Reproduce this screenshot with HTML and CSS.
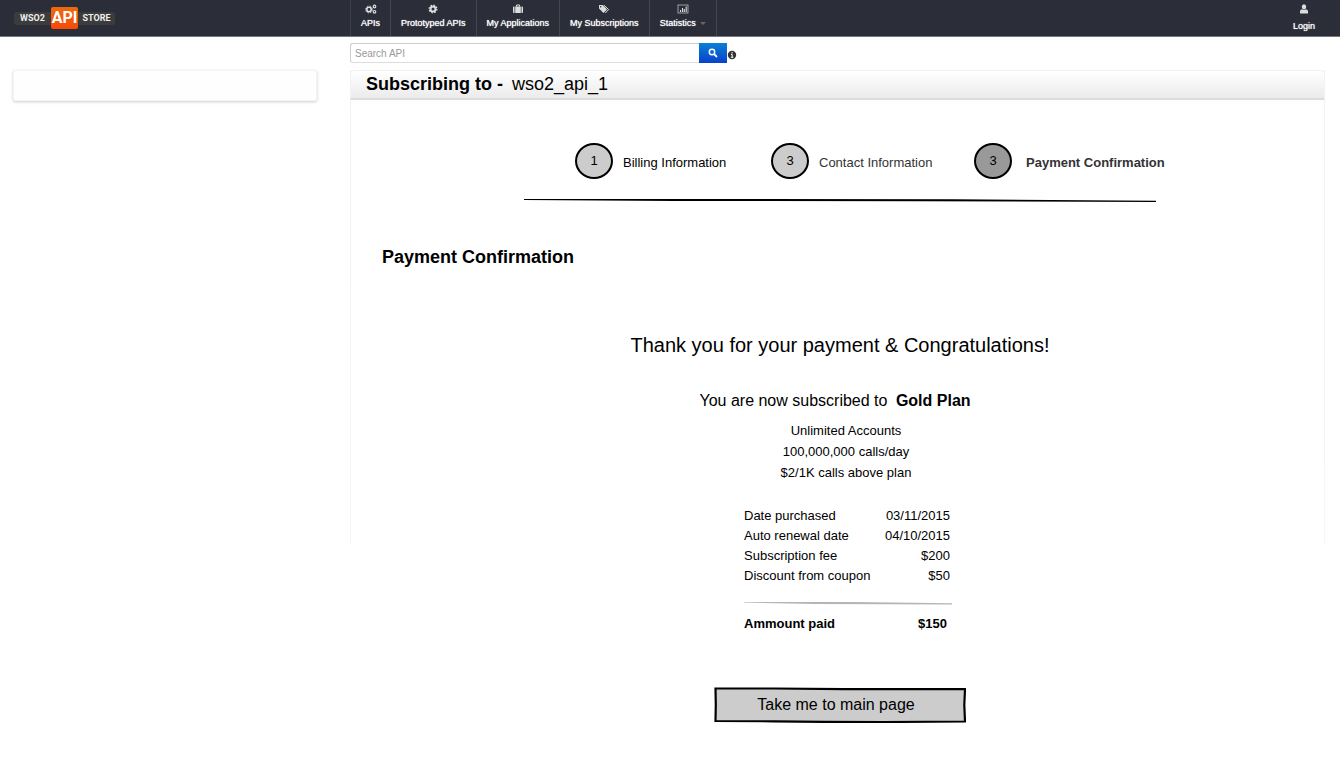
FILE: index.html
```html
<!DOCTYPE html>
<html lang="en">
<head>
<meta charset="utf-8">
<title>WSO2 API Store</title>
<link rel="stylesheet" href="styles.css">
</head>
<body>
<header class="topbar">
  <a class="logo" href="#"><span class="logo-side">WSO2</span><span class="logo-api">API</span><span class="logo-side">STORE</span></a>
  <nav class="nav">
    <a class="nav-item" href="#">
      <svg class="icon" viewBox="0 0 12 10"><g fill="none" stroke="#ddd"><circle cx="4" cy="5.5" r="2.2" stroke-width="1.6"/><circle cx="4" cy="5.5" r="3.4" stroke-width="1" stroke-dasharray="1.4 1.27"/><circle cx="9.5" cy="2.5" r="1.3" stroke-width="1.2"/><circle cx="9.5" cy="7.8" r="1.3" stroke-width="1.2"/></g></svg>
      APIs</a>
    <a class="nav-item" href="#">
      <svg class="icon" viewBox="0 0 12 10"><g fill="none" stroke="#ddd"><circle cx="6" cy="5" r="2.5" stroke-width="2"/><circle cx="6" cy="5" r="3.9" stroke-width="1.2" stroke-dasharray="1.6 1.46"/></g></svg>
      Prototyped APIs</a>
    <a class="nav-item" href="#">
      <svg class="icon" viewBox="0 0 12 10"><path d="M4.5 2.5V1h3v1.500" fill="none" stroke="#ddd"/><path d="M1.800 2.500H2.500V9H1.800Q1 9 1 8V3.500Q1 2.500 1.800 2.500ZM3.200 2.500h5.600V9H3.200ZM9.500 2.500h.7Q11 2.500 11 3.500V8q0 1-.8 1h-.7Z" fill="#ddd"/></svg>
      My Applications</a>
    <a class="nav-item" href="#">
      <svg class="icon" viewBox="0 0 12 10"><path d="M1 1h3.800L9 5.400 5.500 9 1 4.600Z" fill="#ddd"/><circle cx="2.700" cy="2.700" r=".8" fill="#2b2e38"/><path d="M6 1.200 10.600 5.600 7.300 9" fill="none" stroke="#ddd" stroke-width="1"/></svg>
      My Subscriptions</a>
    <a class="nav-item" href="#">
      <svg class="icon" viewBox="0 0 12 10"><rect x="1" y="1" width="10" height="8" fill="none" stroke="#bbb" stroke-width=".8"/><path d="M3.500 8V6M5.500 8V4M7.300 8V5M9.200 8V2.500" stroke="#ddd" stroke-width="1.100"/></svg>
      <span>Statistics <span class="caret"></span></span></a>
  </nav>
  <a class="login" href="#">
    <svg class="icon" viewBox="0 0 12 10"><ellipse cx="6" cy="2.800" rx="2.200" ry="2.600" fill="#ddd"/><path d="M2 9.500V7.500Q2 5.500 4 5.300Q6 6.700 8 5.300Q10 5.500 10 7.500V9.500Z" fill="#ddd"/></svg>
    Login</a>
</header>

<div class="page">
  <aside class="sidebar"><div class="side-box"></div></aside>
  <main class="main">
    <form class="search">
      <input class="search-input" type="text" placeholder="Search API" aria-label="Search API">
      <button class="search-btn" type="button" aria-label="Search"><svg width="10" height="10" viewBox="0 0 10 10"><circle cx="4" cy="4" r="2.700" fill="none" stroke="#fff" stroke-width="1.500"/><path d="M6 6 9 9" stroke="#fff" stroke-width="1.800"/></svg></button>
      <svg class="info" viewBox="0 0 10 10"><circle cx="5" cy="5" r="4.200" fill="#333"/><path d="M5 2v1.500M4 4.500h1.200V7M3.800 7.300h2.600" stroke="#fff" fill="none"/></svg>
    </form>

    <section class="panel">
      <h1 class="panel-head">Subscribing to - <span class="api-name">wso2_api_1</span></h1>
      <div class="panel-body">
        <ol class="steps">
          <li class="step"><span class="dot">1</span><span class="step-label">Billing Information</span></li>
          <li class="step muted"><span class="dot">3</span><span class="step-label">Contact Information</span></li>
          <li class="step current"><span class="dot">3</span><span class="step-label">Payment Confirmation</span></li>
        </ol>
        <svg class="rule" viewBox="0 0 632 6" preserveAspectRatio="none"><path d="M0 2 220 2 430 2.300 632 3.700V5L400 4.300 150 4 0 3Z" fill="#000"/></svg>

        <h2 class="title">Payment Confirmation</h2>
        <p class="thanks">Thank you for your payment &amp; Congratulations!</p>
        <p class="subscribed">You are now subscribed to <strong class="plan">Gold Plan</strong></p>
        <ul class="features">
          <li>Unlimited Accounts</li>
          <li>100,000,000 calls/day</li>
          <li>$2/1K calls above plan</li>
        </ul>

        <table class="bill">
          <tbody>
            <tr><th scope="row">Date purchased</th><td>03/11/2015</td></tr>
            <tr><th scope="row">Auto renewal date</th><td>04/10/2015</td></tr>
            <tr><th scope="row">Subscription fee</th><td>$200</td></tr>
            <tr><th scope="row">Discount from coupon</th><td>$50</td></tr>
          </tbody>
          <tbody>
            <tr><td class="bill-line" colspan="2"><svg viewBox="0 0 208 6" preserveAspectRatio="none"><path d="M0 2 110 2 208 3.300V4.500L70 4 0 2.600Z" fill="#b5b5b5"/></svg></td></tr>
          </tbody>
          <tfoot>
            <tr><th scope="row">Ammount paid</th><td>$150</td></tr>
          </tfoot>
        </table>

        <button class="main-btn" type="button">
          <svg class="btn-frame" viewBox="0 0 252 36" preserveAspectRatio="none"><path d="M1.500 1.500 60 1.500 130 2.200 251 2 250.300 18 251 34.500 170 35 110 34.800 60 34.300 1.500 34 1.800 18Z" fill="#ccc" stroke="#000" stroke-width="2.200"/></svg>
          <span class="btn-text">Take me to main page</span>
        </button>
      </div>
    </section>
  </main>
</div>
</body>
</html>
```
FILE: styles.css
```css
* { box-sizing: border-box; }
body {
  margin: 0;
  background: #fff;
  color: #000;
  font: 13px/20px "Liberation Sans", Arial, sans-serif;
}
h1, h2, p, ul, ol { margin: 0; padding: 0; }
ul, ol { list-style: none; }

.topbar {
  display: grid;
  grid-template-columns: 350px 1fr auto;
  height: 37px;
  background: #2b2e38;
  border-bottom: 1px solid #777;
}
.topbar a { color: #fff; text-decoration: none; }
.logo {
  display: flex;
  align-items: center;
  justify-self: start;
  align-self: center;
  height: 13px;
  margin-left: 14px;
  background: #3c3c3c;
  border-radius: 3px;
  font-family: Roboto, "Liberation Sans", sans-serif;
  font-weight: bold;
}
.logo-side { min-width: 37px; padding: 0 4px; font-size: 9px; line-height: 13px; color: #eee; text-align: center; }
.logo-api {
  width: 27px;
  background: linear-gradient(#ee6a0a, #f84a08);
  border-radius: 2px;
  font-size: 16px;
  line-height: 22px;
  text-align: center;
}
.nav { display: flex; border-left: 1px solid #3f4149; justify-self: start; }
.nav-item, .login {
  display: flex;
  flex-direction: column;
  align-items: center;
  padding: 4px 10px 0;
  font-size: 9px;
  line-height: 12px;
  gap: 3px;
  text-shadow: 0 0 1px #fff;
}
.nav-item { border-right: 1px solid #44464e; }
.login { padding-right: 25px; gap: 6px; }
.icon { width: 12px; height: 10px; }
.caret {
  display: inline-block;
  margin-left: 2px;
  vertical-align: middle;
  border: 3px solid transparent;
  border-top-color: #666;
  border-bottom: 0;
}

.page { display: grid; grid-template-columns: 350px 1fr; }
.sidebar { padding: 33px 33px 0 13px; }
.side-box {
  height: 31px;
  background: #fefefe;
  border: 1px solid #f4f4f4;
  border-radius: 2px;
  box-shadow: 0 1px 3px #ccc;
}
.main { padding: 6px 15px 40px 0; }
.search { display: flex; margin-bottom: 7px; }
.search-input {
  flex: 0 1 349px;
  height: 20px;
  padding: 0 4px;
  border: 1px solid #ccc;
  border-bottom-color: #ddd;
  border-right: 0;
  border-radius: 3px 0 0 3px;
  font: 10px "Liberation Sans", Arial, sans-serif;
}
.search-input::placeholder { color: #999; opacity: 1; }
.search-btn {
  display: grid;
  place-items: center;
  width: 28px;
  height: 20px;
  padding: 0;
  border: 0;
  background: linear-gradient(#0a80d4, #0842cc);
}
.info { width: 10px; height: 10px; align-self: flex-end; margin-bottom: 3px; }

.panel {
  background:
    linear-gradient(#f2f2f2, #f6f6f6) 0 0 / 1px 475px no-repeat,
    linear-gradient(#f2f2f2, #f6f6f6) 100% 0 / 1px 475px no-repeat;
}
.panel-head {
  height: 30px;
  padding-left: 15px;
  border-radius: 4px 4px 0 0;
  border: 1px solid #f2f2f2;
  border-bottom: 2px solid #dcdcdc;
  background: linear-gradient(#fff, #ebebeb);
  font-size: 18px;
  line-height: 27px;
}
.api-name { margin-left: 4px; font-weight: normal; }
.panel-body {
  display: flex;
  flex-direction: column;
  align-items: center;
  padding: 43px 0 0 5px;
}
.steps {
  display: grid;
  grid-template-columns: 196px 203px auto;
  width: 632px;
  padding-left: 51px;
}
.step { display: flex; align-items: center; gap: 10px; white-space: nowrap; }
.step-label { padding-top: 3px; }
.dot {
  flex: none;
  width: 38px;
  height: 36px;
  border: 2px solid #000;
  border-radius: 50%;
  background: #ccc;
  color: #000;
  font-weight: normal;
  line-height: 32px;
  text-align: center;
}
.muted { color: #333; }
.current { gap: 14px; color: #333; font-weight: bold; }
.current .dot { background: #999; }
.rule { width: 632px; height: 6px; margin-top: 18px; }
.title {
  align-self: flex-start;
  margin-top: 42px;
  padding-left: 27px;
  font-size: 18px;
  line-height: 24px;
}
.thanks { margin-top: 64px; font-size: 20px; line-height: 24px; }
.subscribed { margin-top: 32px; padding-right: 10px; font-size: 16px; line-height: 24px; }
.plan { margin-left: 4px; }
.features { margin-top: 7px; padding-left: 12px; line-height: 21px; text-align: center; }
.bill {
  width: 224px;
  margin-top: 23px;
  padding-left: 16px;
  border-spacing: 0;
}
.bill th { padding: 0; text-align: left; font-weight: normal; }
.bill td { padding: 0 2px 0 0; text-align: right; }
.bill .bill-line { padding: 14px 0 8px; }
.bill-line svg { display: block; width: 100%; height: 6px; }
.bill tfoot th, .bill tfoot td { font-weight: bold; }
.bill tfoot td { padding-right: 5px; }
.main-btn {
  display: grid;
  width: 252px;
  height: 36px;
  margin-top: 53px;
  padding: 0;
  border: 0;
  background: none;
  color: #000;
  font: 16px/36px "Liberation Sans", Arial, sans-serif;
}
.btn-frame, .btn-text { grid-area: 1 / 1; }
.btn-frame { width: 100%; height: 36px; }
.btn-text { padding-right: 8px; }
```
